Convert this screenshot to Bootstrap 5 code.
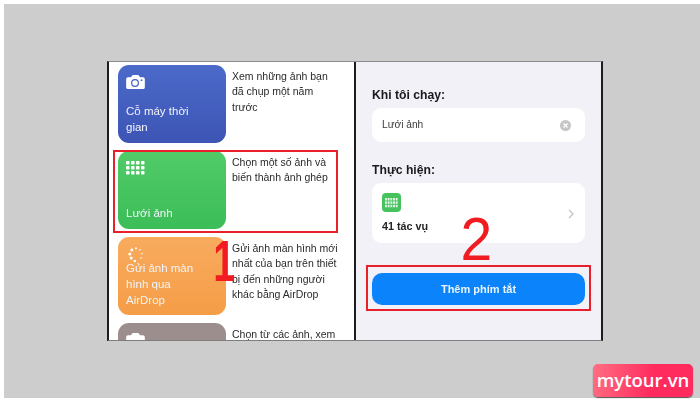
<!DOCTYPE html>
<html lang="en">
<head>
  <meta charset="UTF-8" />
  <title>Thêm phím tắt</title>
  <link href="https://cdn.jsdelivr.net/npm/bootstrap@5.3.0/dist/css/bootstrap.min.css" rel="stylesheet">
  <style>
    body { background: #fff; width: 700px; height: 405px; overflow: hidden; font-family: "Liberation Sans", Arial, sans-serif; }
    .stage { background: #cdcdcd; height: 394px; margin: 4px 0 0 4px; padding: 57px 0 0 103px; position: relative; }
    .phone { width: 496px; height: 280px; border: 2px solid #1d1d20; border-top: 1px solid #8c8c8c; border-bottom: 1px solid #7d7d7d; overflow: hidden; position: relative; filter: blur(.35px); }
    .shortcuts { width: 247px; flex: none; background: #fff; border-right: 2px solid #1d1d20; padding: 3px 0 0 9px; gap: 8px; }
    .setup { background: #f1f1f7; flex: 1; padding: 0 16px; }
    .entry { gap: 6px; flex: none; }
    .tile { width: 108px; height: 78px; border-radius: 11px; color: #f2f4fb; font-size: 11.5px; line-height: 16px; padding: 10px 24px 8px 8px; flex: none; }
    .tile svg { display: block; }
    .tile-blue { background: linear-gradient(#4b6ac9, #3d55b5); }
    .tile-green { background: linear-gradient(#50cb68, #3cbd57); }
    .tile-orange { background: linear-gradient(#f8ab5e, #f59d47); }
    .tile-taupe { background: #9b8e8c; }
    .spin-dots { margin: 0 0 -3px 2px; }
    .blurb { font-size: 10.5px; line-height: 15.4px; color: #2a2a2c; padding-top: 4px; width: 108px; }
    .label-head { font-size: 12.2px; font-weight: 700; color: #1b1b1d; line-height: 16px; }
    .head-run { margin-top: 25px; }
    .head-do { margin-top: 20px; }
    .sheet { background: #fff; border-radius: 9px; }
    .name-box { height: 34px; font-size: 10.2px; color: #3a3a3c; padding: 0 14px 0 10px; margin-top: 5px; }
    .clear-dot { width: 11px; height: 11px; }
    .task-box { height: 60px; padding: 10px 11px 0 10px; margin-top: 5px; font-size: 10.8px; font-weight: 700; color: #242426; }
    .mini-grid { width: 19px; height: 19px; border-radius: 4px; background: #46c35f; margin-bottom: 6px; }
    .add-btn { background: #0b84fb; color: #e9f3ff; height: 32px; border-radius: 10px; border: 0; width: 100%; font-size: 11px; font-weight: 700; margin-top: 30px; }
    .red-frame { position: absolute; border: 2px solid #e8202c; }
    .frame-a { left: 4px; top: 88px; width: 225px; height: 83px; }
    .frame-b { left: 257px; top: 203px; width: 225px; height: 46px; }
    .big-num { position: absolute; color: #f01c22; font-family: "Liberation Sans", Arial, sans-serif; line-height: 1; }
    .num-a { left: 99px; top: 170px; font-size: 58px; font-weight: 700; transform: scaleX(.68); }
    .num-b { left: 350px; top: 146px; font-size: 62px; font-weight: 400; transform: scaleX(.92); }
    .brand-tag { position: absolute; left: 589px; top: 360px; width: 100px; height: 33px; border-radius: 5px; background: linear-gradient(100deg, #ff6f82, #ff2a5e 60%); box-shadow: 0 1px 1px #555; color: #fff; font-family: "Open Sans", sans-serif; font-weight: 600; font-size: 18.5px; line-height: 31px; text-align: center; }
  </style>
</head>
<body>
  <div class="stage">
    <div class="phone d-flex">
      <!-- Left: shortcut gallery -->
      <div class="shortcuts d-flex flex-column">
        <div class="entry d-flex">
          <div class="tile tile-blue d-flex flex-column justify-content-between">
            <svg width="19" height="14" viewBox="0 0 20 15"><path fill="#fff" d="M2 2.500h3L7 0h6l2 2.500h3a2 2 0 0 1 2 2V13a2 2 0 0 1-2 2H2a2 2 0 0 1-2-2V4.500a2 2 0 0 1 2-2z"/><circle cx="9.500" cy="8.500" r="3.600" fill="none" stroke="#4560bf" stroke-width="1.300"/><circle cx="16.500" cy="5.500" r="1" fill="#4560bf"/></svg>
            <div>Cỗ máy thời gian</div>
          </div>
          <div class="blurb">Xem những ảnh bạn đã chụp một năm trước</div>
        </div>
        <div class="entry d-flex">
          <div class="tile tile-green d-flex flex-column justify-content-between">
            <svg width="20" height="14" viewBox="0 0 20 14"><defs><pattern id="dotsA" width="5" height="5" patternUnits="userSpaceOnUse"><rect width="3.500" height="3.500" rx=".7" fill="#fff"/></pattern></defs><rect width="20" height="14" fill="url(#dotsA)"/></svg>
            <div>Lưới ảnh</div>
          </div>
          <div class="blurb">Chọn một số ảnh và biến thành ảnh ghép</div>
        </div>
        <div class="entry d-flex">
          <div class="tile tile-orange">
            <svg class="spin-dots" width="16" height="16" viewBox="0 0 16 16" fill="#fff"><circle cx="8" cy="1.300" r="1"/><circle cx="12" cy="2.800" r=".8"/><circle cx="14" cy="6.500" r=".8"/><circle cx="13" cy="11" r=".8"/><circle cx="3.800" cy="3" r="1.400"/><circle cx="1.800" cy="7" r="1.500"/><circle cx="3.200" cy="11" r="1.500"/><circle cx="6.800" cy="14" r="1.300"/></svg>
            <div>Gửi ảnh màn hình qua AirDrop</div>
          </div>
          <div class="blurb">Gửi ảnh màn hình mới nhất của bạn trên thiết bị đến những người khác bằng AirDrop</div>
        </div>
        <div class="entry d-flex">
          <div class="tile tile-taupe">
            <svg width="19" height="14" viewBox="0 0 20 15"><path fill="#fff" d="M2 2.500h3L7 0h6l2 2.500h3a2 2 0 0 1 2 2V13a2 2 0 0 1-2 2H2a2 2 0 0 1-2-2V4.500a2 2 0 0 1 2-2z"/></svg>
          </div>
          <div class="blurb">Chọn từ các ảnh, xem</div>
        </div>
      </div>
      <!-- Right: add shortcut -->
      <div class="setup">
        <div class="label-head head-run">Khi tôi chạy:</div>
        <div class="sheet name-box d-flex align-items-center justify-content-between">
          <span>Lưới ảnh</span>
          <svg class="clear-dot" viewBox="0 0 11 11"><circle cx="5.500" cy="5.500" r="5.500" fill="#c6c6c8"/><path d="M3.500 3.500l4 4M7.500 3.500l-4 4" stroke="#fff" stroke-width="1.300"/></svg>
        </div>
        <div class="label-head head-do">Thực hiện:</div>
        <div class="sheet task-box d-flex justify-content-between">
          <div>
            <div class="mini-grid d-flex align-items-center justify-content-center">
              <svg width="13" height="10" viewBox="0 0 13 10"><defs><pattern id="dotsB" width="2.700" height="3.400" patternUnits="userSpaceOnUse"><rect width="1.900" height="2.400" fill="#e4f7e8"/></pattern></defs><rect width="13" height="10" fill="url(#dotsB)"/></svg>
            </div>
            <div>41 tác vụ</div>
          </div>
          <svg width="6" height="10" viewBox="0 0 6 10" class="mt-3 ms-auto" fill="none" stroke="#c4c4c6" stroke-width="1.300"><path d="M1 1l4 4-4 4"/></svg>
        </div>
        <button class="add-btn d-block" type="button">Thêm phím tắt</button>
      </div>
      <div class="red-frame frame-a"></div>
      <div class="red-frame frame-b"></div>
      <div class="big-num num-a">1</div>
      <div class="big-num num-b">2</div>
    </div>
    <div class="brand-tag">mytour.vn</div>
  </div>
  <script src="https://cdn.jsdelivr.net/npm/bootstrap@5.3.0/dist/js/bootstrap.bundle.min.js"></script>
</body>
</html>
